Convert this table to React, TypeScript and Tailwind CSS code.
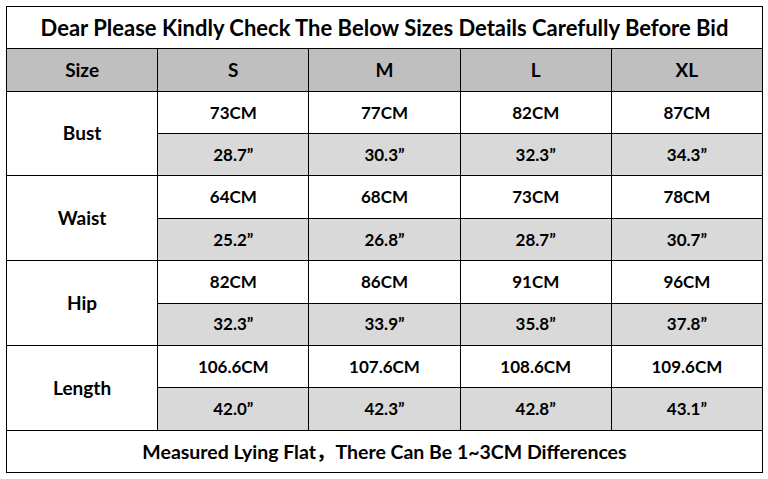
import React from "react";

const sizes = ["S", "M", "L", "XL"];
const rows: { label: string; cm: string[]; inch: string[] }[] = [
  { label: "Bust", cm: ["73CM", "77CM", "82CM", "87CM"], inch: ["28.7”", "30.3”", "32.3”", "34.3”"] },
  { label: "Waist", cm: ["64CM", "68CM", "73CM", "78CM"], inch: ["25.2”", "26.8”", "28.7”", "30.7”"] },
  { label: "Hip", cm: ["82CM", "86CM", "91CM", "96CM"], inch: ["32.3”", "33.9”", "35.8”", "37.8”"] },
  { label: "Length", cm: ["106.6CM", "107.6CM", "108.6CM", "109.6CM"], inch: ["42.0”", "42.3”", "42.8”", "43.1”"] },
];

export default function App() {
  return (
    <div className="w-[768px] h-[479px] bg-white pt-[6px] pl-[6px]" style={{ fontFamily: "Lato, 'Noto Sans CJK SC', sans-serif" }}>
      <div className="w-[757px] h-[467px] bg-black p-px grid gap-px grid-cols-5 grid-rows-[repeat(11,minmax(0,1fr))] font-bold text-black">
        <div className="col-span-5 bg-white flex items-center justify-center text-[22px]">
          Dear Please Kindly Check The Below Sizes Details Carefully Before Bid
        </div>
        <div className="bg-[#bfbfbf] flex items-center justify-center text-[19px]">Size</div>
        {sizes.map((s) => (
          <div key={s} className="bg-[#bfbfbf] flex items-center justify-center text-[19px]">{s}</div>
        ))}
        {rows.map((r) => (
          <React.Fragment key={r.label}>
            <div className="row-span-2 bg-white flex items-center justify-center text-[19px]">{r.label}</div>
            {r.cm.map((v, i) => (
              <div key={"c" + i} className="bg-white flex items-center justify-center text-[17px]">{v}</div>
            ))}
            {r.inch.map((v, i) => (
              <div key={"i" + i} className="bg-[#d9d9d9] flex items-center justify-center text-[17px]">{v}</div>
            ))}
          </React.Fragment>
        ))}
        <div className="col-span-5 bg-white flex items-center justify-center text-[19.5px]">
          Measured Lying Flat，There Can Be 1~3CM Differences
        </div>
      </div>
    </div>
  );
}
